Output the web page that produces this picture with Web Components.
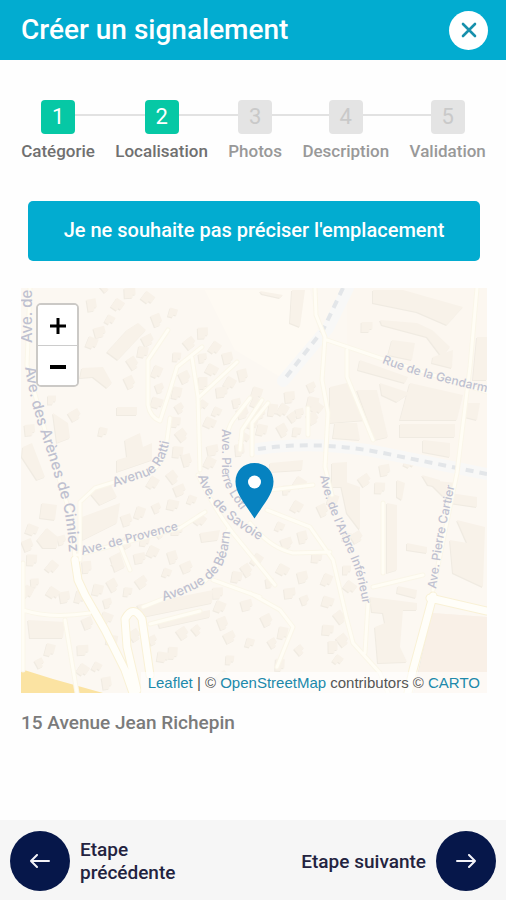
<!DOCTYPE html>
<html lang="fr">
<head>
<meta charset="utf-8">
<meta name="viewport" content="width=device-width, initial-scale=1">
<title>Créer un signalement</title>
<style>
  body { margin: 0; background: #fefefe; font-family: Roboto, "Liberation Sans", sans-serif; }
</style>
</head>
<body>
<report-app></report-app>
<script>
const define = (name, html, setup) => {
  const template = document.createElement('template');
  template.innerHTML = html;
  customElements.define(name, class extends HTMLElement {
    constructor() {
      super();
      this.attachShadow({ mode: 'open' }).append(template.content.cloneNode(true));
    }
    connectedCallback() { if (setup) setup(this, this.shadowRoot); }
  });
};

define('app-header', `
<style>
  :host { display: flex; align-items: center; justify-content: space-between; background: #02acd0; color: #fff; height: 60px; padding: 0 18px 0 21px; }
  h1 { margin: 0; font-size: 28px; font-weight: 500; line-height: 32px; }
  button { display: grid; place-items: center; width: 39px; height: 39px; padding: 0; border: 0; border-radius: 50%; background: #fff; cursor: pointer; }
</style>
<h1><slot></slot></h1>
<button type="button" aria-label="Fermer"><svg width="16" height="16" viewBox="0 0 16 16" fill="none" stroke="#1790ac" stroke-width="2.6" stroke-linecap="round"><path d="M2 2l12 12M14 2L2 14"/></svg></button>
`);

define('progress-step', `
<style>
  :host { display: flex; flex-direction: column; color: #999; --box: #e4e4e4; --digit: #c9c9c9; }
  :host([done]) { color: #707070; --box: #06c8a5; --digit: #fff; }
  .row { display: flex; align-items: flex-start; }
  .row::before, .row::after { content: ""; flex: 1; height: 14px; border-bottom: 2px solid #e2e2e2; }
  :host(:first-child) .row::before, :host(:last-child) .row::after { border-color: transparent; }
  b { width: 34px; height: 34px; border-radius: 4px; background: var(--box); color: var(--digit); font-size: 22px; line-height: 34px; font-weight: 400; text-align: center; }
  .label { padding: 6px 9px 0; font-size: 17px; line-height: 22px; font-weight: 500; text-align: center; white-space: nowrap; }
</style>
<div class="row"><b></b></div>
<div class="label"><slot></slot></div>
`, (el, root) => { root.querySelector('b').textContent = el.getAttribute('number'); });

define('progress-steps', `
<style>
  :host { display: flex; padding: 40px 10px 0 11px; }
  ::slotted(progress-step) { flex: 1 1 auto; }
</style>
<slot></slot>
`);

define('skip-button', `
<style>
  :host { display: block; padding: 0 7px; }
  button { display: block; width: 100%; padding: 17px 12px 19px; border: 0; border-radius: 5px; background: #02acd0; color: #fff; font: 500 20px/24px Roboto, "Liberation Sans", sans-serif; cursor: pointer; }
</style>
<button type="button"><slot></slot></button>
`);

/* Footprints of the large buildings, in map coordinates. */
const blocks = [
  '373,290 403,290 463,307 447,325 417,312 373,303',
  '380,320 417,323 432,330 450,347 442,357 427,337 382,325',
  '392,340 415,343 412,360 388,355',
  '433,357 453,350 452,368 432,363',
  '360,360 408,377 405,383 358,370',
  '380,383 410,393 397,402 382,395',
  '410,383 463,395 457,420 400,420',
  '400,424 455,424 455,437 400,437',
  '292,290 305,290 300,327 290,323',
  '330,387 347,383 367,420 330,423',
  '357,390 377,390 388,437 375,440',
  '335,423 357,423 360,440 333,438',
  '423,440 450,443 450,457 423,452',
  '260,291 283,295 280,298 262,294',
  '270,463 303,460 302,470 270,472',
  '332,463 347,462 347,487 332,487',
  '422,475 440,480 440,487 428,485',
  '477,337 487,337 487,380 473,380',
  '467,403 480,403 477,420 465,417',
  '138,323 146,330 118,360 107,352 127,330',
  '82,368 103,367 112,383 107,388 93,377 80,378',
  '117,407 137,407 137,415 117,415',
  '125,440 140,433 143,447 152,443 152,460 117,472 117,460 127,457',
  '23,447 32,443 45,477 37,480 22,457',
  '53,413 68,423 70,438 57,443',
  '42,503 57,505 55,520 40,518',
  '37,540 47,528 58,537 57,548 43,548',
  '82,517 120,503 117,523 83,540',
  '90,493 110,483 117,497 100,505',
  '110,557 120,552 125,567 115,572',
  '28,620 65,622 63,638 30,638',
  '137,605 213,590 212,603 143,617',
  '157,620 210,610 210,617 160,628',
  '200,533 220,530 218,540 202,542',
  '432,613 487,617 487,693 414,693',
  '370,597 417,603 417,610 403,610 400,647 407,662 378,663 375,627 385,623 383,613 372,612',
  '387,503 397,505 397,570 387,573',
  '407,543 427,547 427,553 407,550',
  '457,520 485,527 483,587 453,573 450,540 467,543',
  '427,480 457,483 450,493 477,497 477,507 450,503',
  '340,480 360,487 360,530 347,513',
  '397,480 405,483 402,500 397,497',
  '398,586 417,590 416,598 397,593'
];
/* Centres of the detached houses. */
const houses = `105,287 130,293 118,305 92,305 110,320 100,332 92,343 157,320 173,313 148,340 143,352 133,363 177,357
190,343 203,333 215,348 203,358 212,370 228,358 157,372 160,388 157,403 185,377 177,393 180,408 175,422 182,435 203,383
203,405 222,392 230,383 243,375 217,412 243,413 257,393 130,382 103,432 75,415 178,452 173,477 52,400 148,298 30,430
153,483 237,403 210,423 127,520 140,513 157,508 173,505 127,542 145,540 160,533 177,530 200,520 87,567 117,563 140,558
153,552 173,557 167,573 187,567 98,590 113,585 128,592 142,582 32,560 52,567 35,583 53,593 65,597 28,592 108,603
107,618 88,623 80,597 153,640 163,657 183,633 173,653 197,630 83,650 83,670 107,683 97,667 247,605 220,607 223,623
250,643 230,637 237,577 247,570 230,660 223,677 218,593 257,560 270,583 283,570 303,577 327,580 305,600 328,602 267,620
283,633 273,643 328,630 343,640 333,647 338,660 290,593 297,507 303,537 280,527 287,543 333,500 323,510 347,537 357,537
317,557 340,617 347,570 350,587 290,397 283,410 300,413 257,403 260,413 253,423 312,387 313,402 313,418 273,410 293,417
367,327 317,408 240,450 245,438 213,450 210,463 187,460 192,500 180,490 262,430 283,430 297,432 365,480 380,488
245,478 287,490 300,483 385,470 410,462 62,540 32,530 28,545 50,650 40,663 112,640 135,635 280,665 300,650`
  .trim().split(/\s+/).map(p => p.split(',').map(Number));

const houseShapes = houses.map(([x, y], i) => {
  const w = 8 + (i * 7) % 4, h = 9 + (i * 5) % 4, turn = (i * 37) % 80 - 40;
  return `<path transform="translate(${x} ${y}) rotate(${turn})" d="M${-w / 2} ${-h / 2}h${w}v${h - 3}h-3v3h${3 - w}z"/>`;
}).join('');

const minorRoads = `
M168 330L148 360V405Q150 417 160 421L170 390L177 367L202 347 M192 358L198 397L200 470 M198 398L237 362
M250 398L233 420Q226 430 227 445 M262 400L242 430L240 450 M315 288L316 315L325 337L322 380L328 413L325 467L332 495
M327 340L380 358L487 392 M347 350V377L373 440 M268 403L252 423V455 M308 408V435
M267 510L310 527L333 560L347 620L353 643L380 673L388 693 M250 523Q270 548 293 553L330 552
M373 587L423 575 M368 603L365 653 M250 593L280 610L293 627L277 667 M198 475Q212 505 232 532L275 585
M270 490L313 485 M383 503V573 M23 610Q50 619 90 613 M65 620L77 693 M77 555L180 528L205 512
M80 560V502L95 488L153 470Q166 460 167 440L170 418 M143 607L163 599L200 585Q222 570 228 530 M213 580L260 597
M23 563V670 M120 545L130 570 M150 624L200 611
M30 288L27 365L42 420L58 475L72 520L75 560 M477 288L470 367L457 473L433 590`;
const mainRoads = `M75 560L78 580L85 595L105 630L125 670L133 693 M433 596L413 670L408 693 M430 598L487 611
M137 690L127 647L125 619Q133 604 142 619L150 675`;

define('zoom-control', `
<style>
  :host { display: flex; flex-direction: column; width: 39px; border: 2px solid #cbc9c6; border-radius: 5px; background: #fff; overflow: hidden; }
  button { display: grid; place-items: center; height: 40px; padding: 2px 0 0; border: 0; background: #fff; cursor: pointer; }
  button + button { border-top: 1px solid #ccc; }
</style>
<button type="button" aria-label="Zoom avant"><svg width="18" height="18" viewBox="0 0 18 18" stroke="#000" stroke-width="3"><path d="M1 9h16M9 1v16"/></svg></button>
<button type="button" aria-label="Zoom arrière"><svg width="18" height="18" viewBox="0 0 18 18" stroke="#000" stroke-width="4"><path d="M1 9h16"/></svg></button>
`);

define('location-map', `
<style>
  :host { display: block; position: relative; overflow: hidden; aspect-ratio: 466 / 405; background: #fcf8f2; }
  .map { display: block; width: 100%; height: 100%; }
  .labels { font: 500 12px Inter, "Open Sans", sans-serif; fill: #bfc1d0; stroke: #fcf9f3; stroke-width: 1px; paint-order: stroke; }
  .labels .big { font-size: 15px; }
  .labels .wide { font-size: 13px; }
  zoom-control { position: absolute; left: 15px; top: 15px; }
  .credit { position: absolute; right: 0; bottom: 0; padding: 0 7px; background: rgba(255,255,255,.6); color: #555; font: 15px/21px "Liberation Sans", sans-serif; white-space: nowrap; }
  a { color: #2089ab; text-decoration: none; }
</style>
<svg class="map" viewBox="21 288 466 405" preserveAspectRatio="xMidYMid slice" role="img" aria-label="Carte autour du 15 Avenue Jean Richepin">
  <defs>
    <g id="built">${blocks.map(p => `<polygon points="${p}"/>`).join('')}${houseShapes}</g>
    <path id="l1" d="M32 343V270"/>
    <path id="l2" d="M25 367C31 410 42 435 52 468S68 510 70 575"/>
    <path id="l3" d="M114 487L145 477Q167 470 171 430"/>
    <path id="l4" d="M222 429V475Q224 490 246 516"/>
    <path id="l5" d="M198 476Q208 514 272 547"/>
    <path id="l6" d="M82 555L200 524"/>
    <path id="l7" d="M163 601Q204 590 220 569Q230 555 231 515"/>
    <path id="l8" d="M320 476C327 513 347 545 355 570Q361 590 366 625"/>
    <path id="l9" d="M436 589L443 540L458 470"/>
    <path id="l10" d="M382 363Q430 382 520 399"/>
  </defs>
  <rect x="21" y="288" width="466" height="405" fill="#fcf8f2"/>
  <path d="M347 288H487V480L347 440z" fill="#fcf7f0"/>
  <path d="M205 290H310L318 330L282 378L235 350z" fill="#fefaf3"/>
  <use href="#built" x="-1" y="1" fill="#f0ebe2"/>
  <use href="#built" fill="#f8f2e9"/>
  <polygon points="432,613 487,617 487,693 414,693" fill="#f9f0e7"/>
  <polygon points="21,669 53,679 103,693 21,693" fill="#fbe3a2"/>
  <g fill="none" stroke-linecap="round" stroke-linejoin="round">
    <path d="M348 288L328 328L283 381 M258 449Q317 440 383 453L487 474" stroke="#f8f8f7" stroke-width="12"/>
    <path d="M343 288L323 330L283 381 M258 449Q317 440 383 453L487 474" stroke="#e3e6e9" stroke-width="4" stroke-linecap="butt" stroke-dasharray="8 6"/>
    <path d="${minorRoads}" stroke="#faf6e9" stroke-width="5"/>
    <path d="${mainRoads}" stroke="#f9f1d6" stroke-width="9"/>
    <path d="${minorRoads}" stroke="#fffdf5" stroke-width="3"/>
    <path d="${mainRoads}" stroke="#fffef9" stroke-width="7"/>
  </g>
  <g class="labels">
    <text class="big"><textPath href="#l1">Ave. de</textPath></text>
    <text class="big"><textPath href="#l2">Ave. des Arènes de Cimiez</textPath></text>
    <text class="wide"><textPath href="#l3">Avenue Ratti</textPath></text>
    <text><textPath href="#l4">Ave. Pierre Loti</textPath></text>
    <text class="wide"><textPath href="#l5">Ave. de Savoie</textPath></text>
    <text><textPath href="#l6">Ave. de Provence</textPath></text>
    <text class="wide"><textPath href="#l7">Avenue de Béarn</textPath></text>
    <text><textPath href="#l8">Ave. de l'Arbre Inférieur</textPath></text>
    <text><textPath href="#l9">Ave. Pierre Cartier</textPath></text>
    <text><textPath href="#l10">Rue de la Gendarm</textPath></text>
  </g>
  <path fill="#0682c0" d="M254.500 463C243.500 463 235.500 471 235.500 481.500C235.500 494 246 505 254.500 518.500C263 505 273.500 494 273.500 481.500C273.500 471 265.500 463 254.500 463z"/>
  <circle cx="254.500" cy="482" r="6.500" fill="#fff"/>
</svg>
<zoom-control></zoom-control>
<div class="credit"><a href="#leaflet">Leaflet</a> | © <a href="#osm">OpenStreetMap</a> contributors © <a href="#carto">CARTO</a></div>
`);

define('step-button', `
<style>
  :host { display: block; }
  button { display: flex; align-items: center; gap: 10px; padding: 0; border: 0; background: none; color: #23233f; font: 500 19px/23px Roboto, "Liberation Sans", sans-serif; text-align: left; cursor: pointer; }
  :host([direction="next"]) button { flex-direction: row-reverse; }
  :host([direction="next"]) svg { transform: scaleX(-1); }
  .disc { display: grid; place-items: center; flex: none; width: 60px; height: 60px; border-radius: 50%; background: #06174a; }
</style>
<button type="button"><span class="disc"><svg width="20" height="14" viewBox="0 0 20 14" fill="none" stroke="#f3f3f8" stroke-width="2" stroke-linecap="round" stroke-linejoin="round"><path d="M19 7H1M7 1L1 7l6 6"/></svg></span><span><slot></slot></span></button>
`);

define('report-app', `
<style>
  :host { display: flex; flex-direction: column; min-height: 100vh; }
  main { padding: 39px 19px 24px 21px; }
  main p { margin: 18px 0 0; color: #7b7b7b; font-size: 19px; line-height: 24px; font-weight: 500; }
  location-map { margin-top: 27px; }
  footer { display: flex; align-items: center; justify-content: space-between; margin-top: auto; padding: 11px 10px 9px; background: #f6f6f6; }
</style>
<app-header>Créer un signalement</app-header>
<progress-steps>
  <progress-step number="1" done>Catégorie</progress-step>
  <progress-step number="2" done>Localisation</progress-step>
  <progress-step number="3">Photos</progress-step>
  <progress-step number="4">Description</progress-step>
  <progress-step number="5">Validation</progress-step>
</progress-steps>
<main>
  <skip-button>Je ne souhaite pas préciser l'emplacement</skip-button>
  <location-map></location-map>
  <p>15 Avenue Jean Richepin</p>
</main>
<footer>
  <step-button direction="previous">Etape<br>précédente</step-button>
  <step-button direction="next">Etape suivante</step-button>
</footer>
`);
</script>
</body>
</html>
